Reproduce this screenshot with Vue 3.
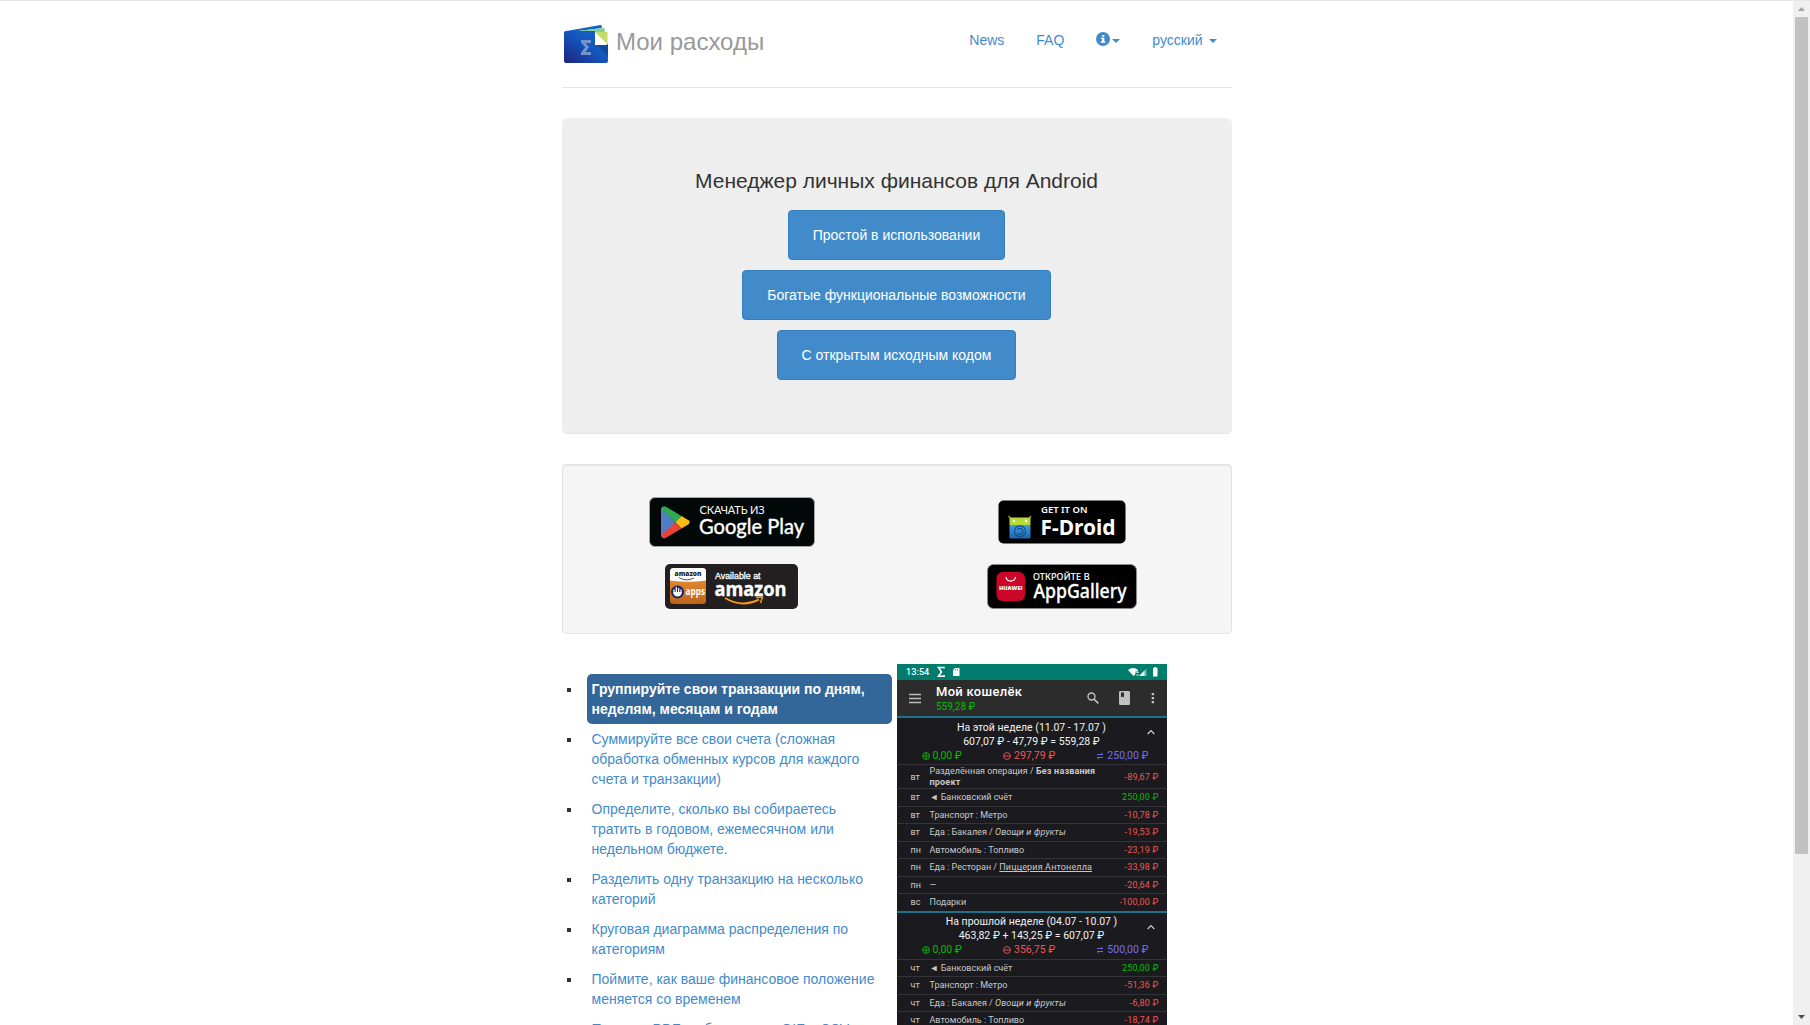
<script setup>
const buttons = ['Простой в использовании', 'Богатые функциональные возможности', 'С открытым исходным кодом']

const features = [
  'Группируйте свои транзакции по дням, неделям, месяцам и годам',
  'Суммируйте все свои счета (сложная обработка обменных курсов для каждого счета и транзакции)',
  'Определите, сколько вы собираетесь тратить в годовом, ежемесячном или недельном бюджете.',
  'Разделить одну транзакцию на несколько категорий',
  'Круговая диаграмма распределения по категориям',
  'Поймите, как ваше финансовое положение меняется со временем',
  'Печать в PDF и обмен через QIF и CSV',
]

const weeks = [
  {
    title: 'На этой неделе (11.07 - 17.07 )',
    sum: '607,07 ₽ - 47,79 ₽ = 559,28 ₽',
    income: '0,00 ₽',
    expense: '297,79 ₽',
    transfer: '250,00 ₽',
    rows: [
      { day: 'вт', text: 'Разделённая операция / ', bold: 'Без названия проект', amount: '-89,67 ₽', tall: true },
      { day: 'вт', text: '◄ Банковский счёт', amount: '250,00 ₽', plus: true },
      { day: 'вт', text: 'Транспорт : Метро', amount: '-10,78 ₽' },
      { day: 'вт', text: 'Еда : Бакалея / ', italic: 'Овощи и фрукты', amount: '-19,53 ₽' },
      { day: 'пн', text: 'Автомобиль : Топливо', amount: '-23,19 ₽' },
      { day: 'пн', text: 'Еда : Ресторан / ', under: 'Пиццерия Антонелла', amount: '-33,98 ₽' },
      { day: 'пн', text: '—', amount: '-20,64 ₽' },
      { day: 'вс', text: 'Подарки', amount: '-100,00 ₽' },
    ],
  },
  {
    title: 'На прошлой неделе (04.07 - 10.07 )',
    sum: '463,82 ₽ + 143,25 ₽ = 607,07 ₽',
    income: '0,00 ₽',
    expense: '356,75 ₽',
    transfer: '500,00 ₽',
    rows: [
      { day: 'чт', text: '◄ Банковский счёт', amount: '250,00 ₽', plus: true },
      { day: 'чт', text: 'Транспорт : Метро', amount: '-51,36 ₽' },
      { day: 'чт', text: 'Еда : Бакалея / ', italic: 'Овощи и фрукты', amount: '-6,80 ₽' },
      { day: 'чт', text: 'Автомобиль : Топливо', amount: '-18,74 ₽' },
    ],
  },
]
</script>

<template>
  <div class="page">
    <main class="view">
      <div class="container">
        <header class="header">
          <a class="brand">
            <svg class="logo" width="46" height="41" viewBox="0 0 46 41">
              <defs>
                <linearGradient id="wallet" x1="0" y1="1" x2="1" y2="0">
                  <stop offset="0" stop-color="#1a237e" />
                  <stop offset=".55" stop-color="#1557bd" />
                  <stop offset="1" stop-color="#1565c8" />
                </linearGradient>
              </defs>
              <path d="M2 7.200 L37.500 1 q1.200 0 1.200 1.200 V4 L10 7.800z" fill="#1560c4" />
              <path d="M10 7.500 L40.500 4 q1.200 0 1.200 1.200 V8 H10z" fill="#81d194" />
              <path d="M1 9 q0-2 2-2 H32 V20 H45 V37 q0 2-2 2 H3 q-2 0-2-2z" fill="url(#wallet)" />
              <path d="M33 20 H45 V32z" fill="#0f4b9c" />
              <path d="M32 8 L44.500 21 H32z" fill="#fff" />
              <path d="M32 8 H44.500 V20.500z" fill="#c5db6b" />
              <path d="M18 16 H28 V19 H22.500 L26 23.300 L22.500 28 H28 V31 H18 V28.600 L22.300 23.300 L18 18.400z" fill="#7593d0" />
            </svg>
            <span>Мои расходы</span>
          </a>
          <nav class="nav">
            <a>News</a>
            <a>FAQ</a>
            <a>
              <svg class="info" width="14" height="14" viewBox="0 0 14 14">
                <circle cx="7" cy="7" r="7" fill="#428bca" />
                <path d="M6 3h2.300v1.800H6zM5 5.800h3.300v3.500h1v1.400H4.800V9.300H6V7H5z" fill="#fff" />
              </svg><b class="caret"></b>
            </a>
            <a>русский&nbsp;<b class="caret"></b></a>
          </nav>
        </header>

        <section class="jumbotron">
          <h1>Менеджер личных финансов для Android</h1>
          <a v-for="b in buttons" :key="b" class="btn">{{ b }}</a>
        </section>

        <section class="well">
          <svg width="166" height="50" viewBox="0 0 166 50">
            <rect x=".5" y=".5" width="165" height="49" rx="5.500" fill="#020707" stroke="#a6a6a6" />
            <path d="M12 11 V40 L26.500 25.300z" fill="#527cc4" />
            <path d="M12 12 q1-4 5-2.300 L32.500 19 L26.300 25.300z" fill="#30a952" />
            <path d="M32.500 19 L39.500 23.300 q2.500 2 0 4 L32.500 31.500 L26.300 25.300z" fill="#fabc12" />
            <path d="M12 38.500 q1 4 5 2.300 L32.500 31.500 L26.300 25.300z" fill="#ea4335" />
            <text x="50.500" y="16.500" font-size="11" textLength="65" class="lato" fill="#fff">СКАЧАТЬ ИЗ</text>
            <text x="50" y="37" font-size="21" textLength="105" lengthAdjust="spacingAndGlyphs" class="lato" stroke="#fff" stroke-width=".4" fill="#fff">Google Play</text>
          </svg>
          <svg width="128" height="44" viewBox="0 0 128 44">
            <defs>
              <linearGradient id="droid" x1="0" y1="0" x2="0" y2="1">
                <stop offset="0" stop-color="#3f9ee0" />
                <stop offset="1" stop-color="#1f65ad" />
              </linearGradient>
            </defs>
            <rect x=".5" y=".5" width="127" height="43" rx="5" fill="#000" />
            <path d="M10.500 16 L13 19 M33 16 L30.500 19" stroke="#90ad2a" stroke-width="1.200" />
            <rect x="11.500" y="17.500" width="21" height="8" rx="1" fill="#b7d93a" />
            <circle cx="16" cy="21" r="1.200" fill="#fff" />
            <circle cx="28" cy="21" r="1.200" fill="#fff" />
            <rect x="11.500" y="25" width="21" height="13.500" rx="1" fill="url(#droid)" />
            <circle cx="22" cy="31.300" r="5.500" fill="none" stroke="#154c8b" stroke-width="1.200" />
            <path d="M19.500 29.500 a3 3 0 1 1 0 3.600" fill="none" stroke="#154c8b" stroke-width="1.200" />
            <text x="43" y="12.600" font-size="9.300" textLength="46.500" lengthAdjust="spacingAndGlyphs" class="noto" font-weight="600" fill="#fff">GET IT ON</text>
            <text x="42.500" y="34.500" font-size="20.500" textLength="75" lengthAdjust="spacingAndGlyphs" class="noto" font-weight="700" fill="#fff">F-Droid</text>
          </svg>
          <svg width="133" height="45" viewBox="0 0 133 45">
            <defs>
              <linearGradient id="apps" x1="0" y1="0" x2="0" y2="1">
                <stop offset="0" stop-color="#f49b37" />
                <stop offset="1" stop-color="#bd641d" />
              </linearGradient>
            </defs>
            <rect width="133" height="45" rx="5" fill="#231f20" />
            <rect x="5" y="4" width="36" height="36" rx="3.500" fill="url(#apps)" />
            <path d="M5 16.500 V7.500 q0-3.500 3.500-3.500 H37.500 q3.500 0 3.500 3.500 V16.500 Q23 19 5 16.500z" fill="#fff" />
            <text x="9.500" y="12.300" font-size="7.500" textLength="27" lengthAdjust="spacingAndGlyphs" class="open" font-weight="800" fill="#231f20">amazon</text>
            <path d="M14 13.500 q7 4.500 15 .5" fill="none" stroke="#555" stroke-width="1" />
            <circle cx="12.500" cy="28" r="6.500" fill="#17245c" />
            <path d="M9 29 V26 M11.300 28 V23.300 M13.600 28 V24.500 M16 29 V26" stroke="#fff" stroke-width="1.300" stroke-linecap="round" />
            <path d="M8.500 28 H16.500 V30 q-1 2.500-4 2.500 t-4-2.500z" fill="#fff" />
            <text x="20.500" y="31" font-size="10" textLength="19.500" lengthAdjust="spacingAndGlyphs" class="open" font-weight="700" fill="#fff">apps</text>
            <text x="50" y="14.500" font-size="8.800" textLength="45.500" lengthAdjust="spacingAndGlyphs" class="arial" stroke="#fff" stroke-width=".3" fill="#fff">Available at</text>
            <text x="49.500" y="31.700" font-size="20" textLength="72" lengthAdjust="spacingAndGlyphs" class="open" font-weight="700" stroke="#fff" stroke-width=".4" fill="#fff">amazon</text>
            <path d="M60 34 q17 10 34 1.500" fill="none" stroke="#f7981d" stroke-width="2" />
            <path d="M91 33.500 L97.500 33 L95.500 39" fill="none" stroke="#f7981d" stroke-width="1.500" />
          </svg>
          <svg width="150" height="45" viewBox="0 0 150 45">
            <rect x=".5" y=".5" width="149" height="44" rx="6" fill="#000" stroke="#8a8a8a" />
            <rect x="9.500" y="8" width="28.500" height="29" rx="6" fill="#cb0628" />
            <path d="M19 13 a4.800 4.800 0 0 0 9.500 0" fill="none" stroke="#fff" stroke-width="1.200" />
            <text x="12" y="26.300" font-size="5.200" textLength="23.500" lengthAdjust="spacingAndGlyphs" class="open" font-weight="800" fill="#fff">HUAWEI</text>
            <text x="46" y="16" font-size="9" textLength="56.500" class="noto" fill="#fff" stroke="#fff" stroke-width=".2">ОТКРОЙТЕ В</text>
            <text x="46.500" y="34" font-size="19.500" textLength="93" lengthAdjust="spacingAndGlyphs" class="noto" font-weight="500" stroke="#fff" stroke-width=".3" fill="#fff">AppGallery</text>
          </svg>
        </section>

        <section class="showcase">
          <ul class="features">
            <li v-for="(f, i) in features" :key="f"><a :class="{ active: i === 0 }">{{ f }}</a></li>
          </ul>

          <div class="phone">
            <div class="status">
              <span class="clock">13:54</span>
              <svg width="270" height="16" viewBox="0 0 270 16">
                <path d="M47 4.500 V3.500 H41.500 L44.500 8 L41.500 12.300 H47 V11" fill="none" stroke="#fff" stroke-width="1.600" />
                <path d="M58 4 H62.500 V12 H56 V6z" fill="#fff" />
                <path d="M58.500 5v1.500M60.500 5v1.500" stroke="#007d6c" stroke-width=".7" />
                <path d="M231 6 q5-4 10 0 V7.500 H238.500 V10 L236.500 12z" fill="#fff" />
                <path d="M239.500 8.500h2M239.500 11h2" stroke="#fff" stroke-width="1" />
                <path d="M249.500 4.500 V12 H242z" fill="#6db2aa" />
                <path d="M247.500 6.500 V12 H242z" fill="#e6f3f1" />
                <path d="M256 4 H257.200 V3 H259.300 V4 H260.500 V12.500 H256z" fill="#fff" />
              </svg>
            </div>
            <div class="toolbar">
              <svg width="13" height="11" viewBox="0 0 13 11"><path d="M0 1.500H13M0 5.500H13M0 9.500H13" stroke="#bbb" stroke-width="1.300" /></svg>
              <div class="wallet"><strong>Мой кошелёк</strong><span>559,28 ₽</span></div>
              <svg class="search" width="12" height="12" viewBox="0 0 12 12"><circle cx="4.500" cy="4.500" r="3.500" fill="none" stroke="#c0c0c0" stroke-width="1.400" /><path d="M7 7L11.300 11.300" stroke="#c0c0c0" stroke-width="1.700" /></svg>
              <svg class="book" width="11" height="14" viewBox="0 0 11 14"><rect width="11" height="14" rx="1.200" fill="#c0c0c0" /><path d="M2 1.500H5V6.500L3.500 5.500L2 6.500z" fill="#2c2c2c" /></svg>
              <svg class="dots" width="4" height="12" viewBox="0 0 4 12"><path d="M.7 1h2.400v2.200H.7zM.7 5h2.400v2.200H.7zM.7 9h2.400v2.200H.7z" fill="#c0c0c0" /></svg>
            </div>
            <section v-for="w in weeks" :key="w.title" class="week">
              <div class="summary">
                <p>{{ w.title }}</p>
                <p>{{ w.sum }}</p>
                <div class="totals">
                  <span class="income"><svg width="8" height="8" viewBox="0 0 8 8"><circle cx="4" cy="4" r="3.400" /><path d="M4 .6V7.400M.6 4H7.400" /></svg>{{ w.income }}</span>
                  <span class="expense"><svg width="8" height="8" viewBox="0 0 8 8"><circle cx="4" cy="4" r="3.400" /><path d="M.6 4H7.400" /></svg>{{ w.expense }}</span>
                  <span class="transfer"><svg width="8" height="8" viewBox="0 0 8 8"><path d="M1 2.500H7M5.300 1L7 2.500M7 5.500H1L2.700 7" /></svg>{{ w.transfer }}</span>
                </div>
                <svg class="chevron" width="8" height="6" viewBox="0 0 8 6"><path d="M.7 5L4 1.500L7.300 5" fill="none" stroke="#ccc" stroke-width="1.200" /></svg>
              </div>
              <div v-for="(r, i) in w.rows" :key="i" class="row" :class="{ tall: r.tall }">
                <span class="day">{{ r.day }}</span>
                <span class="label">{{ r.text }}<b v-if="r.bold">{{ r.bold }}</b><i v-if="r.italic">{{ r.italic }}</i><u v-if="r.under">{{ r.under }}</u></span>
                <span class="amount" :class="{ plus: r.plus }">{{ r.amount }}</span>
              </div>
            </section>
          </div>
        </section>
      </div>
    </main>

    <aside class="scrollbar">
      <svg width="17" height="16" viewBox="0 0 17 16"><path d="M5 10H12L8.500 6z" fill="#a3a3a3" /></svg>
      <div class="thumb"></div>
      <svg class="down" width="17" height="17" viewBox="0 0 17 17"><path d="M5 7H12L8.500 11z" fill="#505050" /></svg>
    </aside>
  </div>
</template>

<style>
body {
  overflow: hidden;
}
</style>

<style scoped>
.page {
  display: flex;
  box-sizing: border-box;
  height: 1025px;
  overflow: hidden;
  border-top: 1px solid #e5e5e5;
  background: #fff;
  color: #333;
  font: 14px/20px "Liberation Sans", Arial, sans-serif;
}
.view {
  flex: 1;
  overflow: hidden;
}
.container {
  width: 670px;
  margin: 0 auto;
}
.header {
  display: flex;
  justify-content: space-between;
  box-sizing: border-box;
  height: 87px;
  padding-top: 19px;
  border-bottom: 1px solid #e5e5e5;
}
.brand {
  display: flex;
  gap: 7px;
  color: #999;
  font-size: 24px;
  line-height: 44px;
}
.logo {
  margin: 4px 0 0 1.500px;
}
.nav {
  display: flex;
  gap: 2px;
  color: #428bca;
}
.nav a {
  display: flex;
  height: 20px;
  padding: 10px 15px;
}
.info {
  margin-top: 2px;
}
.caret {
  width: 0;
  height: 0;
  margin: 9px 0 0 2px;
  border: 4px solid transparent;
  border-top-color: #428bca;
  border-bottom: 0;
}
.jumbotron {
  display: flex;
  flex-direction: column;
  align-items: center;
  gap: 10px;
  box-sizing: border-box;
  height: 316px;
  margin-top: 30px;
  padding-top: 48px;
  border-bottom: 1px solid #e5e5e5;
  border-radius: 6px;
  background: #eee;
}
.jumbotron h1 {
  margin: 0 0 4px;
  font-size: 21px;
  font-weight: 400;
  line-height: 30px;
}
.btn {
  padding: 14px 24px;
  border: 1px solid #357ebd;
  border-radius: 4px;
  background: #428bca;
  color: #fff;
}
.well {
  display: grid;
  grid-template: 50px 45px / 330px 330px;
  gap: 17px 0;
  place-content: start center;
  place-items: center;
  box-sizing: border-box;
  height: 170px;
  margin-top: 30px;
  padding-top: 32px;
  border: 1px solid #e3e3e3;
  border-radius: 4px;
  background: #f5f5f5;
  box-shadow: inset 0 1px 1px rgba(0, 0, 0, .05);
}
.lato {
  font-family: Lato, sans-serif;
}
.noto {
  font-family: "Noto Sans", sans-serif;
}
.open {
  font-family: "Open Sans", sans-serif;
}
.arial {
  font-family: "Liberation Sans", Arial, sans-serif;
}
.showcase {
  display: flex;
  gap: 5px;
  margin-top: 30px;
}
.features {
  width: 325px;
  margin: 0;
  padding: 10px 0 0 5px;
  list-style: none;
}
.features li {
  display: flex;
  gap: 16px;
}
.features li::before {
  content: "";
  flex: none;
  width: 4px;
  height: 4px;
  margin-top: 14px;
  background: #333;
}
.features a {
  flex: 1;
  padding: 5px;
  border-radius: 5px;
  color: #428bca;
}
.features a.active {
  background: #336699;
  color: #fff;
  font-weight: 700;
}
.phone {
  width: 270px;
  height: 400px;
  overflow: hidden;
  background: #1b1b1f;
  color: #f2f2f2;
  font-family: Roboto, sans-serif;
}
.status {
  display: grid;
  height: 16px;
  background: #007d6c;
}
.status > * {
  grid-area: 1 / 1;
}
.clock {
  padding-left: 9.500px;
  color: #fff;
  font-size: 9px;
  font-weight: 500;
  letter-spacing: .1px;
  line-height: 17px;
}
.toolbar {
  display: flex;
  align-items: center;
  box-sizing: border-box;
  height: 38px;
  padding: 0 12px;
  border-bottom: 2px solid #1d7189;
  background: #2c2c2c;
}
.wallet {
  display: flex;
  flex-direction: column;
  width: 151px;
  margin: 0 0 0 14.500px;
}
.wallet strong {
  color: #fff;
  font-size: 13px;
  font-weight: 500;
  letter-spacing: .3px;
  line-height: 17px;
}
.wallet span {
  color: #00be00;
  font-size: 10px;
  line-height: 14px;
}
.search {
  margin-bottom: 1px;
}
.book {
  margin-left: 20px;
}
.dots {
  margin-left: 21px;
}
.week + .week {
  border-top: 2px solid #1d7189;
}
.week + .week .summary p:first-child {
  margin-top: 2px;
}
.summary {
  position: relative;
  box-sizing: border-box;
  height: 46px;
  overflow: hidden;
}
.summary p {
  margin: 0;
  font-size: 10.500px;
  line-height: 14px;
  text-align: center;
}
.summary p:first-child {
  margin-top: 3px;
}
.totals {
  display: flex;
  justify-content: space-between;
  padding: 0 18px 0 25px;
  font-size: 10.500px;
  line-height: 14px;
}
.totals span {
  display: flex;
  align-items: center;
  gap: 3px;
}
.totals svg {
  fill: none;
  stroke: currentColor;
  stroke-width: .9;
}
.income,
.plus {
  color: #00be00;
}
.expense {
  color: #ee5554;
}
.transfer {
  color: #746ff0;
}
.chevron {
  position: absolute;
  top: 11px;
  right: 12px;
}
.row {
  display: flex;
  align-items: center;
  box-sizing: border-box;
  height: 17.500px;
  padding: 1px 8px 0 14px;
  border-top: 1px solid #333338;
  color: #c8c8c8;
  font-size: 9px;
  line-height: 11px;
}
.row.tall {
  height: 24px;
}
.day {
  width: 19px;
}
.label {
  width: 175px;
}
.label b {
  letter-spacing: .2px;
}
.label i,
.label u {
  letter-spacing: .15px;
}
.label u {
  text-underline-offset: 1px;
}
.amount {
  flex: 1;
  color: #ee5554;
  letter-spacing: .15px;
  text-align: right;
  white-space: nowrap;
}
.amount.plus {
  color: #00be00;
}
.scrollbar {
  display: flex;
  flex-direction: column;
  width: 17px;
  background: #f0f0f0;
}
.thumb {
  width: 13px;
  height: 837px;
  margin-left: 2px;
  background: #c1c1c1;
}
.down {
  margin-top: auto;
}
</style>
